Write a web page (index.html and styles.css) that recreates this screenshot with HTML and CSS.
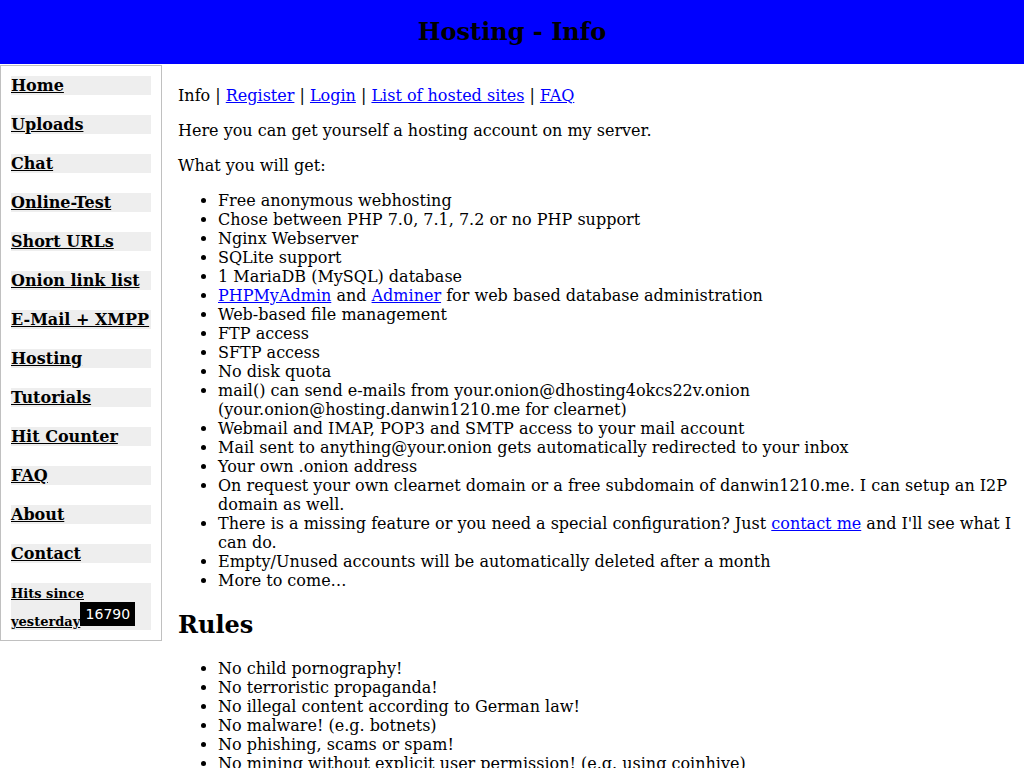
FILE: index.html
```html
<!DOCTYPE html>
<html>
<head>
<meta charset="utf-8">
<title>Hosting - Info</title>
<link rel="stylesheet" href="styles.css">
</head>
<body>
<header class="top"><h1 class="title">Hosting - Info</h1></header>
<div class="layout">
<nav class="menu">
<div class="item"><a href="#">Home</a></div>
<div class="item"><a href="#">Uploads</a></div>
<div class="item"><a href="#">Chat</a></div>
<div class="item"><a href="#">Online-Test</a></div>
<div class="item"><a href="#">Short URLs</a></div>
<div class="item"><a href="#">Onion link list</a></div>
<div class="item"><a href="#">E-Mail + XMPP</a></div>
<div class="item"><a href="#">Hosting</a></div>
<div class="item"><a href="#">Tutorials</a></div>
<div class="item"><a href="#">Hit Counter</a></div>
<div class="item"><a href="#">FAQ</a></div>
<div class="item"><a href="#">About</a></div>
<div class="item"><a href="#">Contact</a></div>
<div class="item hits"><a href="#" class="small">Hits since yesterday</a><span class="counter">16790</span></div>
</nav>
<main class="content">
<p>Info | <a href="#">Register</a> | <a href="#">Login</a> | <a href="#">List of hosted sites</a> | <a href="#">FAQ</a></p>
<p>Here you can get yourself a hosting account on my server.</p>
<p>What you will get:</p>
<ul>
<li>Free anonymous webhosting</li>
<li>Chose between PHP 7.0, 7.1, 7.2 or no PHP support</li>
<li>Nginx Webserver</li>
<li>SQLite support</li>
<li>1 MariaDB (MySQL) database</li>
<li><a href="#">PHPMyAdmin</a> and <a href="#">Adminer</a> for web based database administration</li>
<li>Web-based file management</li>
<li>FTP access</li>
<li>SFTP access</li>
<li>No disk quota</li>
<li>mail() can send e-mails from your.onion@dhosting4okcs22v.onion (your.onion@hosting.danwin1210.me for clearnet)</li>
<li>Webmail and IMAP, POP3 and SMTP access to your mail account</li>
<li>Mail sent to anything@your.onion gets automatically redirected to your inbox</li>
<li>Your own .onion address</li>
<li>On request your own clearnet domain or a free subdomain of danwin1210.me. I can setup an I2P domain as well.</li>
<li>There is a missing feature or you need a special configuration? Just <a href="#">contact me</a> and I'll see what I can do.</li>
<li>Empty/Unused accounts will be automatically deleted after a month</li>
<li>More to come…</li>
</ul>
<h2>Rules</h2>
<ul>
<li>No child pornography!</li>
<li>No terroristic propaganda!</li>
<li>No illegal content according to German law!</li>
<li>No malware! (e.g. botnets)</li>
<li>No phishing, scams or spam!</li>
<li>No mining without explicit user permission! (e.g. using coinhive)</li>
</ul>
</main>
</div>
</body>
</html>
```
FILE: styles.css
```css
html, body {
  margin: 0;
  padding: 0;
  background: #fff;
  color: #000;
  font-family: "DejaVu Serif", serif;
  font-size: 16px;
}
.top {
  background: #0000ff;
  height: 64px;
  display: flex;
  align-items: center;
  justify-content: center;
}
.title {
  margin: 0;
  font-size: 24px;
  font-weight: bold;
  position: relative;
  top: -1px;
}
.layout {
  display: flex;
  align-items: flex-start;
}
.menu {
  flex: 0 0 auto;
  width: 140px;
  padding: 10px;
  border: 1px solid #c0c0c0;
  margin-top: 1px;
}
.item {
  background: #eee;
  font-weight: bold;
  margin-bottom: 20px;
}
.item:last-child {
  margin-bottom: 0;
}
.item a {
  color: #000;
}
.hits .small {
  font-size: 13px;
}
.counter {
  display: inline-block;
  overflow: hidden;
  background: #000;
  color: #fff;
  font-family: "DejaVu Sans", sans-serif;
  font-weight: normal;
  font-size: 14px;
  width: 55px;
  height: 24px;
  line-height: 24px;
  text-align: center;
  vertical-align: baseline;
}
.content {
  flex: 1 1 auto;
  padding: 6px 10px 0 16px;
}
.content a {
  color: #0000ff;
}
.content h2 {
  font-size: 24px;
}
```
